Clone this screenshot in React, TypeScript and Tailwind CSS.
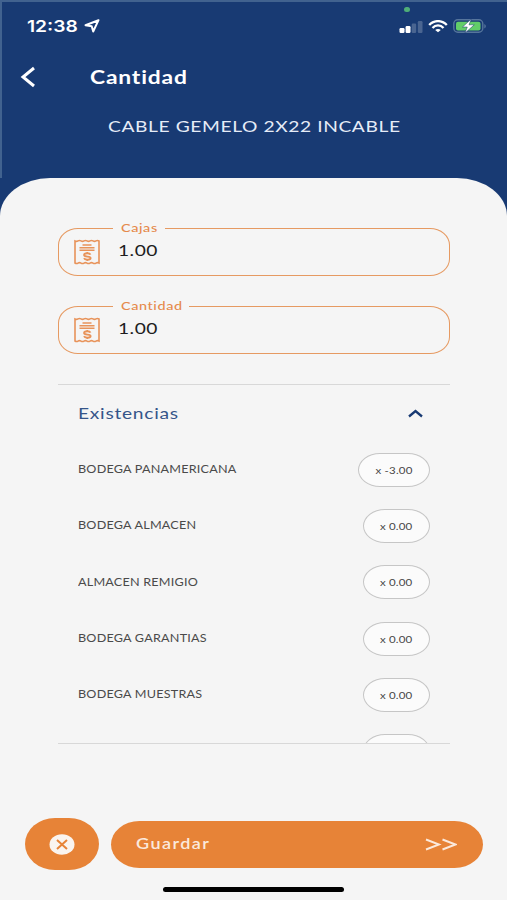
import { useState } from 'react';

const stock = [
  { name: 'BODEGA PANAMERICANA', qty: '-3.00', wide: true },
  { name: 'BODEGA ALMACEN', qty: '0.00' },
  { name: 'ALMACEN REMIGIO', qty: '0.00' },
  { name: 'BODEGA GARANTIAS', qty: '0.00' },
  { name: 'BODEGA MUESTRAS', qty: '0.00' },
];

function ReceiptIcon() {
  return (
    <svg className="w-[26px] h-[26px] shrink-0" viewBox="0 0 26 26" fill="none" stroke="#e8935a" strokeWidth="1.6">
      <path d="M1 2Q2.500 2.800 4 1.900T7 1.900T10 1.900T13 1.900T16 1.900T19 1.900T22 1.900T25 2V24Q23.500 23.200 22 24.100T19 24.100T16 24.100T13 24.100T10 24.100T7 24.100T4 24.100T1 24Z" />
      <path d="M8.500 6h9M5.500 8.700h15M5.500 11.200h15" />
      <path d="M16.500 15.600c-.5-1-1.800-1.300-3.200-1.300-1.900 0-3.200.8-3.200 1.700 0 2.400 6.500.8 6.500 3 0 1.200-1.400 1.700-3.200 1.700-1.600 0-3-.5-3.400-1.500" strokeWidth="1.900" />
      <path d="M13.300 13v1.500M13.300 20.500v1.500" />
    </svg>
  );
}

function Field({ label, legendClass, value, onChange }: {
  label: string;
  legendClass: string;
  value: string;
  onChange: (v: string) => void;
}) {
  return (
    <fieldset className="h-[56px] w-[392px] border border-[#e69a62] rounded-[20px/17px] pl-[15px]">
      <legend className={`ml-[39px] h-[16px] pl-2 text-[12px] leading-[15px] font-medium text-[#e58a4c] ${legendClass}`}>
        <span className="inline-block origin-left scale-x-[1.2] tracking-[0.5px]">{label}</span>
      </legend>
      <div className="flex items-start gap-[18px]">
        <div className="pt-[3px]">
          <ReceiptIcon />
        </div>
        <input
          value={value}
          onChange={e => onChange(e.target.value)}
          className="w-[240px] h-[27px] origin-left scale-x-[1.2] bg-transparent text-[16px] leading-[27px] tracking-[0.4px] text-[#1e1e1e] outline-none"
        />
      </div>
    </fieldset>
  );
}

function StatusBar() {
  return (
    <div className="flex justify-between h-[50px] pl-[25px] pr-[20px] pt-[5px]">
      <div className="flex items-center h-[38px]">
        <span className="w-[57px] font-['Inter'] text-[16px] font-semibold">
          <span className="inline-block origin-left scale-x-[1.2]">12:38</span>
        </span>
        <svg className="w-[16px] h-[14px]" viewBox="0 0 16 14" fill="none" stroke="white" strokeWidth="2" strokeLinejoin="round">
          <path d="M14.500 1.200 1.500 6.200 7.700 7.200 9.200 12.500Z" />
        </svg>
      </div>
      <div className="flex flex-col items-start">
        <span className="w-[6px] h-[5px] ml-[5px] rounded-full bg-[#4fae78]" />
        <div className="flex items-center mt-[7px] gap-[5px]">
          <svg className="w-[24px] h-[13px]" viewBox="0 0 24 13" fill="white">
            <rect x="0.500" y="8" width="5" height="5" rx="1.200" />
            <rect x="6.600" y="6" width="4.900" height="7" rx="1.200" />
            <rect x="12.700" y="3.500" width="4.500" height="9.500" rx="1.200" opacity=".22" />
            <rect x="18.800" y="1" width="4.700" height="12" rx="1.200" opacity=".22" />
          </svg>
          <svg className="w-[20px] h-[13px]" viewBox="0 0 20 13" fill="none" stroke="white" strokeWidth="2.300">
            <path d="M1.200 5C6-.2 14-.2 18.800 5" />
            <path d="M4.500 7.900c3-3.300 8-3.300 11 0" />
            <path d="M10 12.300 7.200 9.900c1.600-1.300 4-1.300 5.600 0Z" fill="white" stroke="none" />
          </svg>
          <svg className="w-[34px] h-[14px]" viewBox="0 0 34 14">
            <rect x=".8" y=".8" width="29" height="12.400" rx="4" fill="none" stroke="#56759c" strokeWidth="1.400" />
            <rect x="3" y="2.700" width="24.500" height="8.800" rx="2" fill="#62cd68" />
            <path d="M31.300 5v4.500c2-.8 2-3.700 0-4.500Z" fill="#56759c" />
            <path d="M18.300 0 9.500 8h4.800l-2.300 6 9.300-8.200H16Z" fill="white" stroke="#183a73" strokeWidth=".5" />
          </svg>
        </div>
      </div>
    </div>
  );
}

export default function App() {
  const [boxes, setBoxes] = useState('1.00');
  const [amount, setAmount] = useState('1.00');
  const [open, setOpen] = useState(true);

  return (
    <div className="w-[507px] h-[900px] overflow-hidden flex flex-col bg-[#183a73] font-['Lato',sans-serif]">
      <header className="h-[178px] shrink-0 border-t-2 border-l-2 border-[#41628f] text-white">
        <StatusBar />
        <div className="flex items-center h-[50px] pl-[18px]">
          <button type="button" className="w-[70px]">
            <svg className="w-[16px] h-[22px]" viewBox="0 0 16 22" fill="none" stroke="white" strokeWidth="3">
              <path d="M14 2 3 11l11 9" />
            </svg>
          </button>
          <h1 className="origin-left scale-x-[1.2] text-[19px] font-bold tracking-[0.7px]">Cantidad</h1>
        </div>
        <p className="pt-[9px] pl-[106px] text-[16px] leading-[29px] text-[#e6ecf7] whitespace-nowrap">
          <span className="inline-block origin-left scale-x-[1.2] tracking-[0.5px]">CABLE GEMELO 2X22 INCABLE</span>
        </p>
      </header>

      <main className="flex-1 flex flex-col bg-[#f5f5f5] [border-top-left-radius:50px_38px] [border-top-right-radius:50px_38px]">
        <div className="flex flex-col items-start gap-[22px] pl-[58px] pt-[42px]">
          <Field label="Cajas" legendClass="w-[52px]" value={boxes} onChange={setBoxes} />
          <Field label="Cantidad" legendClass="w-[76px]" value={amount} onChange={setAmount} />
        </div>

        <section className="mt-[30px] ml-[58px] w-[392px] h-[360px] shrink-0 overflow-hidden border-y border-[#d8d8d8]">
          <button type="button" onClick={() => setOpen(!open)} className="flex items-center justify-between w-full h-[57px] pl-5 pr-[27px]">
            <span className="origin-left scale-x-[1.2] text-[16px] tracking-[0.6px] text-[#35558a] pb-[2px]">Existencias</span>
            <svg className="w-[15px] h-[9px]" viewBox="0 0 15 9" fill="none" stroke="#183a73" strokeWidth="2.300">
              <path d="M1 7.500 7.500 2 14 7.500" />
            </svg>
          </button>
          {open && (
            <ul>
              {stock.map(item => (
                <li key={item.name} className="flex items-center justify-between h-[56.200px] pl-5 pr-[20px]">
                  <span className="origin-left scale-x-[1.2] text-[10.500px] tracking-[0.180px] text-[#4a4a4a]">{item.name}</span>
                  <span className={`flex items-center justify-center h-[34px] border border-[#c6c6c6] bg-[#fbfbfb] rounded-[22px/17px] text-[10px] leading-[14px] text-[#454545] ${item.wide ? 'w-[72px]' : 'w-[67px]'}`}>
                    <span className="inline-block scale-x-[1.15] tracking-[0.150px]">x {item.qty}</span>
                  </span>
                </li>
              ))}
              <li className="flex items-center justify-end h-[56.200px] pr-[20px]">
                <span className="w-[67px] h-[34px] border border-[#c6c6c6] bg-[#fbfbfb] rounded-[22px/17px]" />
              </li>
            </ul>
          )}
        </section>

        <footer className="flex items-center gap-[12px] pl-[25px] mt-[74px] text-[#fbe9dc]">
          <button type="button" className="w-[74px] h-[52px] rounded-[30px/26px] bg-[#e78337] flex items-center justify-center">
            <svg className="w-[26px] h-[21px]" viewBox="0 0 26 21">
              <ellipse cx="13" cy="10.500" rx="12.500" ry="10.200" fill="#faf4ef" />
              <path d="m8 6 10 9M18 6 8 15" stroke="#e78337" strokeWidth="2" />
            </svg>
          </button>
          <button type="button" className="w-[372px] h-[47px] rounded-[29px/24px] bg-[#e78337] flex items-center justify-between pl-[25px] pr-[26px]">
            <span className="origin-left scale-x-[1.2] text-[15px] font-semibold tracking-[1.200px] pb-px">Guardar</span>
            <svg className="w-[32px] h-[13px]" viewBox="0 0 32 13" fill="none" stroke="#fbe9dc" strokeWidth="1.900">
              <path d="m1 1.500 13 5-13 5M17.500 1.500l13 5-13 5" />
            </svg>
          </button>
        </footer>
        <div className="w-[181px] h-[5px] mt-[17px] ml-[163px] rounded-full bg-black" />
      </main>
    </div>
  );
}
